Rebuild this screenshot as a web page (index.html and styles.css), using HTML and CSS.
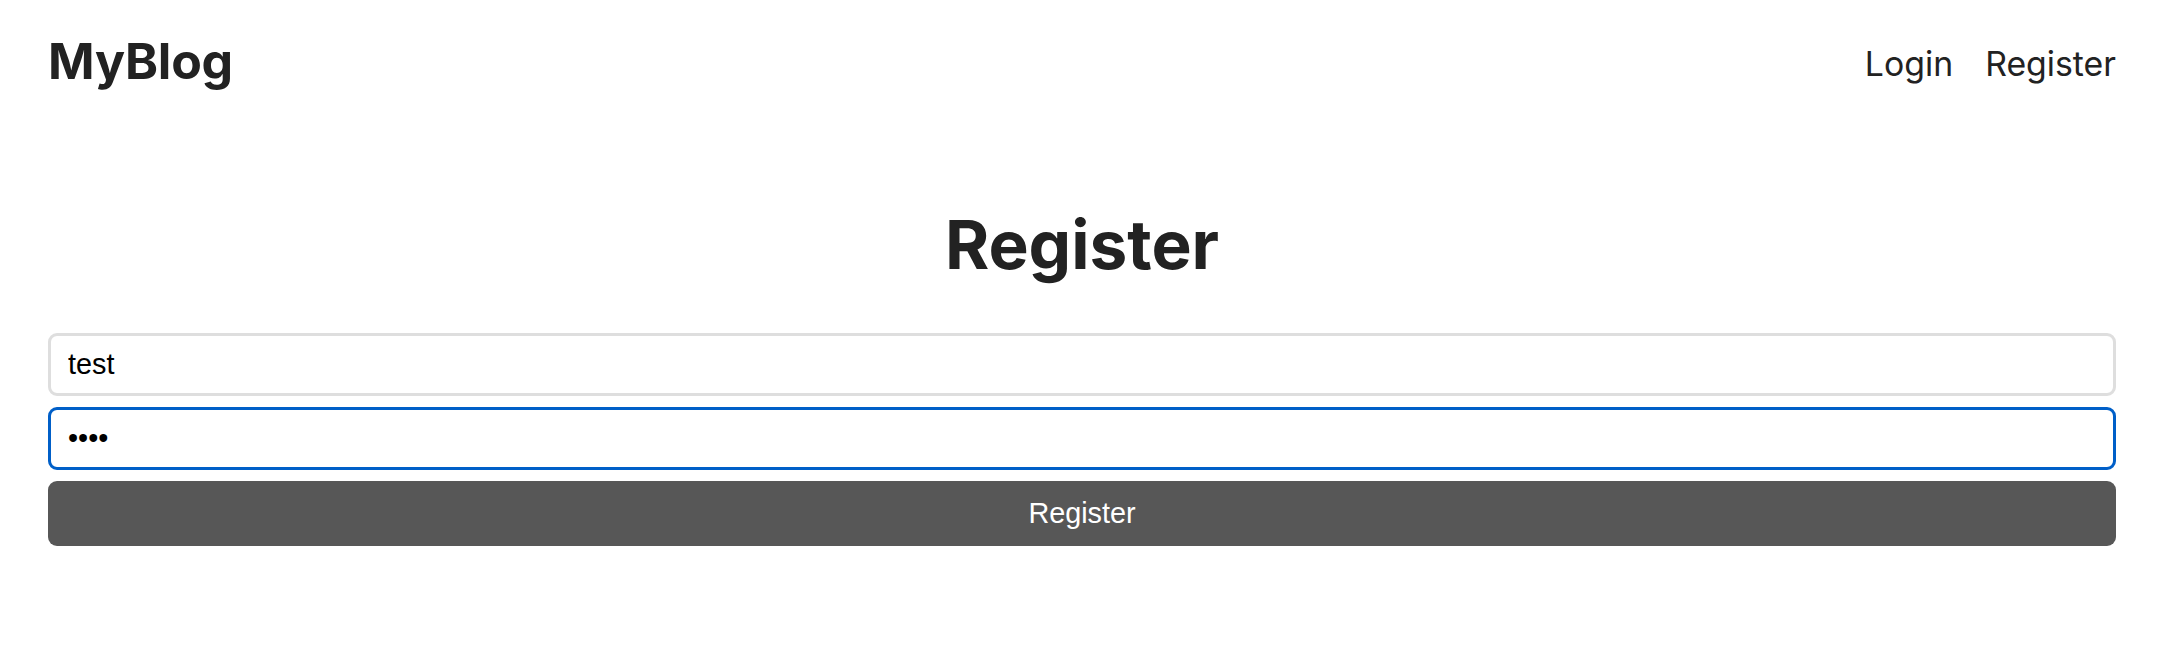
FILE: index.html
```html
<!DOCTYPE html>
<html lang="en">
<head>
<meta charset="utf-8">
<title>Register - MyBlog</title>
<link rel="stylesheet" href="styles.css">
</head>
<body>
<div class="page">
  <header class="site-header">
    <a class="brand" href="#">MyBlog</a>
    <nav class="nav">
      <a class="nav-link" href="#">Login</a>
      <a class="nav-link" href="#">Register</a>
    </nav>
  </header>
  <main class="main">
    <h1 class="title">Register</h1>
    <form class="form">
      <input class="field" type="text" name="username" value="test">
      <input class="field field-active" type="password" name="password" value="test" autofocus>
      <button class="btn" type="button">Register</button>
    </form>
  </main>
</div>
</body>
</html>
```

FILE: styles.css
```css
* { box-sizing: border-box; }

html, body {
  margin: 0;
  padding: 0;
  background: #ffffff;
}

body {
  font-family: Inter, "Noto Sans", "Liberation Sans", sans-serif;
  color: #222222;
}

.page {
  padding: 0 52px 0 48px;
}

.site-header {
  display: flex;
  align-items: center;
  justify-content: space-between;
  padding-top: 31px;
}

.brand {
  font-size: 50px;
  font-weight: 700;
  line-height: 60px;
  color: #222222;
  text-decoration: none;
  letter-spacing: -0.2px;
}

.nav {
  display: flex;
  gap: 32px;
  padding-top: 4px;
}

.nav-link {
  font-size: 33.8px;
  line-height: 41px;
  color: #222222;
  text-decoration: none;
}

.main {
  padding-top: 114px;
}

.title {
  margin: 0;
  font-size: 67.5px;
  line-height: 80px;
  font-weight: 700;
  text-align: center;
  color: #222222;
}

.form {
  display: flex;
  flex-direction: column;
  gap: 11px;
  margin-top: 48px;
}

.field {
  display: block;
  width: 100%;
  height: 63px;
  padding: 0 17px;
  border: 3px solid #dedede;
  border-radius: 9px;
  background: #ffffff;
  font-family: "Liberation Sans", Arial, sans-serif;
  font-size: 28.8px;
  color: #000000;
  outline: none;
  caret-color: #000000;
}

.field-active {
  border-color: #005fc8;
  border-width: 3.5px;
}

.btn {
  display: block;
  width: 100%;
  height: 65px;
  border: 0;
  border-radius: 9px;
  background: #575757;
  color: #ffffff;
  font-family: "Liberation Sans", Arial, sans-serif;
  font-size: 28.8px;
  cursor: pointer;
}
```
